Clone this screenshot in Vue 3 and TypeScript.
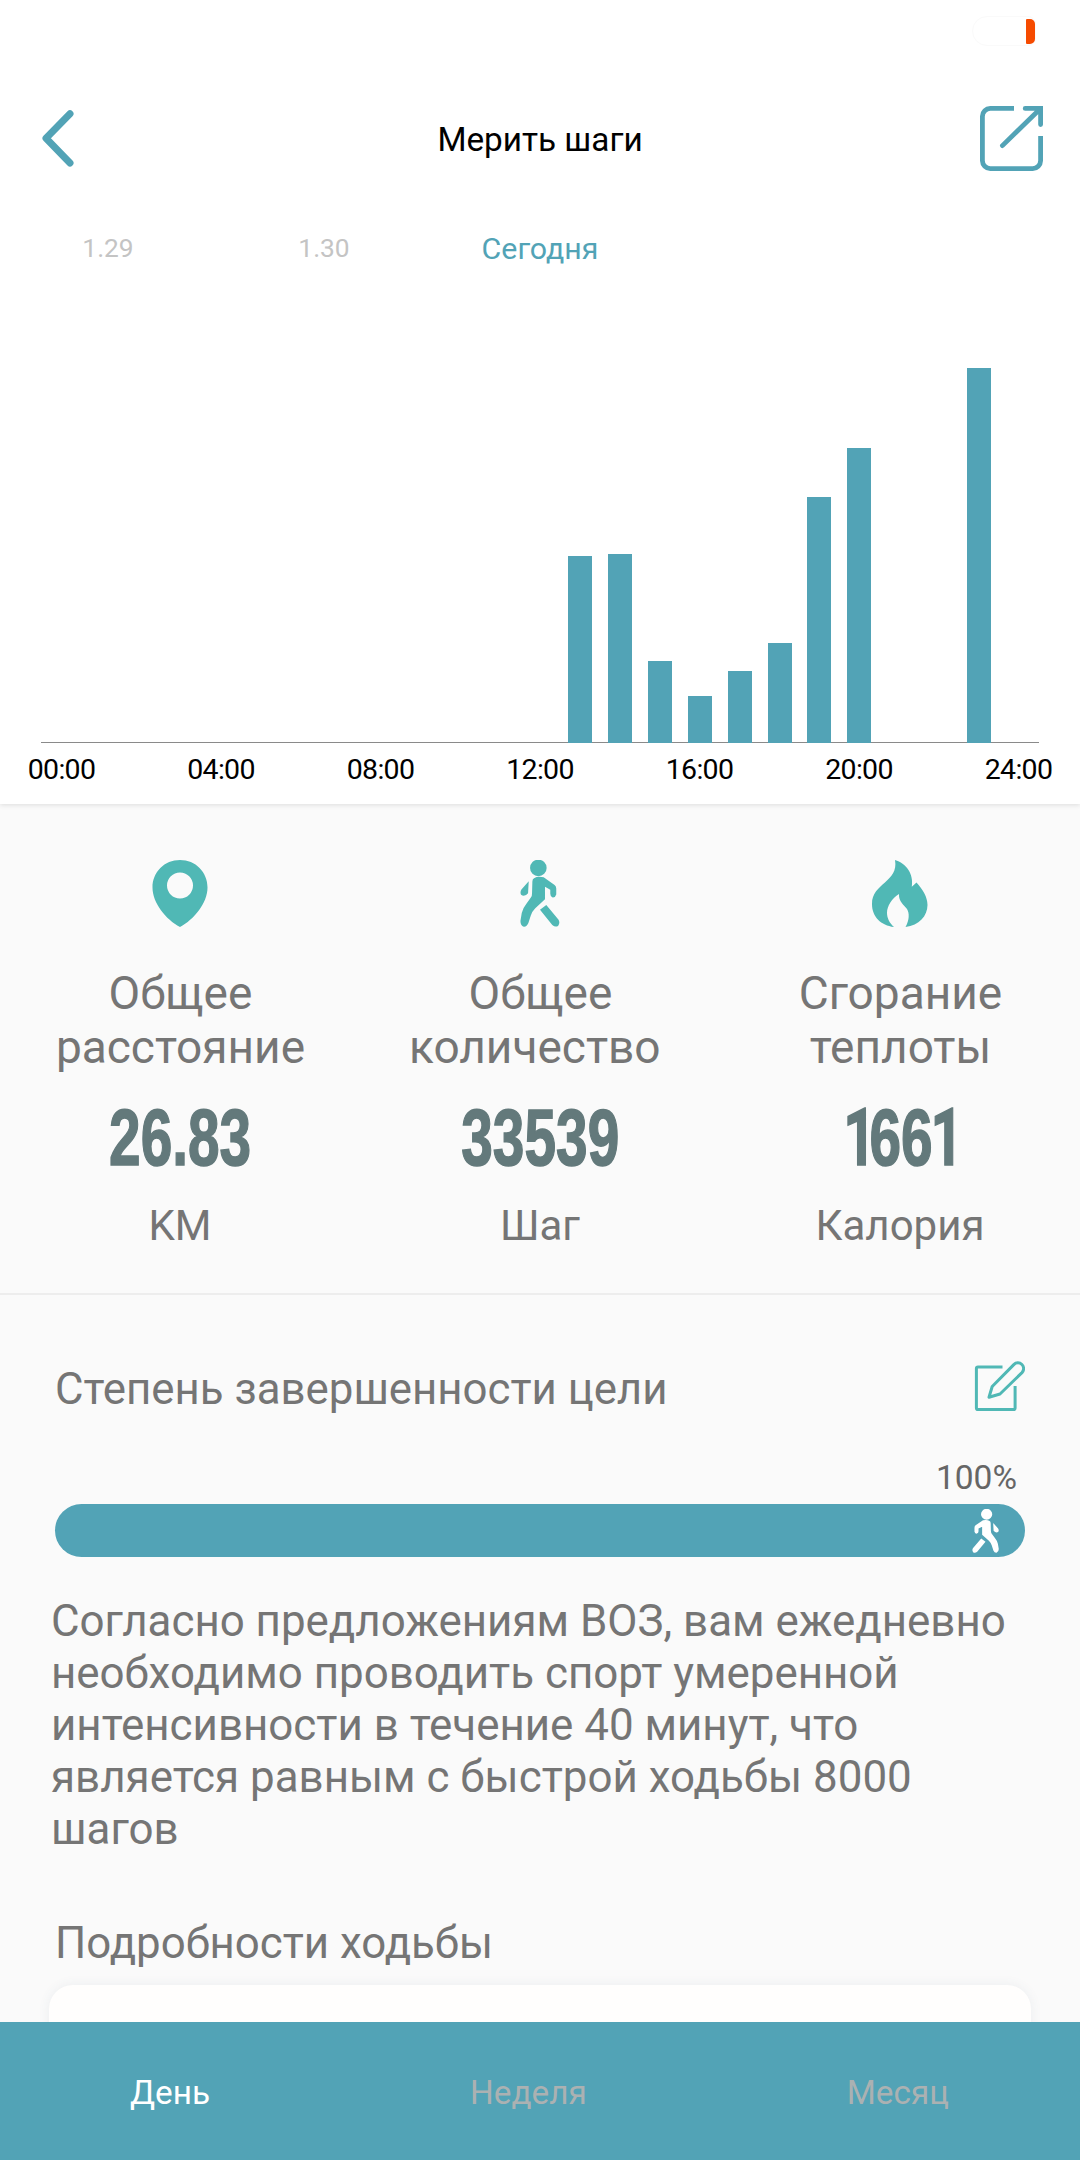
<script setup lang="ts">
interface Stat {
  icon: 'pin' | 'walk' | 'flame'
  label: string[]
  value: string
  unit: string
}

const days = ['1.29', '1.30', 'Сегодня', '', '']
const activeDay = 2

// One slot per hour, 0 through 24; values are bar heights in pixels.
const hours: number[] = Array.from({ length: 25 }, () => 0)
const recorded: Record<number, number> = {
  13: 187, 14: 189, 15: 82, 16: 47, 17: 72, 18: 100, 19: 246, 20: 295, 23: 375,
}
for (const [hour, height] of Object.entries(recorded)) hours[Number(hour)] = height

const ticks = ['00:00', '04:00', '08:00', '12:00', '16:00', '20:00', '24:00']

const stats: Stat[] = [
  { icon: 'pin', label: ['Общее', 'расстояние'], value: '26.83', unit: 'KM' },
  { icon: 'walk', label: ['Общее', 'количество\u00a0'], value: '33539', unit: 'Шаг' },
  { icon: 'flame', label: ['Сгорание', 'теплоты'], value: '1661', unit: 'Калория' },
]

const walker = [
  'M114 59 A25 25 0 1 1 114 109 A25 25 0 1 1 114 59Z',
  'M85 124 L63 149 Q58 157 62 165 Q72 173 83 160Z',
  'M101 115 Q112 108 130 112 L163 135 Q168 139 168 146 V164 Q165 174 157 173 Q150 171 150 162 V150 L134 141 V178 L104 206 Q94 216 91 228 L84 250 Q79 262 70 261 Q60 258 60 244 L64 220 Q68 204 78 192 L92 172 Q95 168 95 160 L96 125 Q96 118 101 115Z',
  'M138 196 L175 240 Q180 250 174 258 Q166 264 156 256 L119 210Z',
].join(' ')

const tabs = ['День', 'Неделя', 'Месяц']
const progress = 100
</script>

<template>
  <div class="screen">
    <div class="status">
      <div class="battery"><span class="charge"></span></div>
    </div>

    <header class="header">
      <svg class="back" width="32" height="57" viewBox="0 0 32 57">
        <path d="M28 3.800 L4 28.300 L28 53" />
      </svg>
      <h1>Мерить шаги</h1>
      <svg class="share" width="63" height="65" viewBox="0 0 63 65">
        <path d="M34 2.400 H10.500 A8 8 0 0 0 2.400 10.500 V54.500 A8 8 0 0 0 10.500 62.600 H52.500 A8 8 0 0 0 60.600 54.500 V30" />
        <path class="round" d="M22.400 39.600 L59 4 M45.200 2.400 H60.600 V18.500" />
      </svg>
    </header>

    <nav class="days">
      <span v-for="(d, i) in days" :key="i" :class="{ active: i === activeDay }">{{ d }}</span>
    </nav>

    <section class="chart">
      <div class="plot">
        <div v-for="(h, i) in hours" :key="i" class="slot">
          <div class="bar" :style="{ height: h + 'px' }"></div>
        </div>
      </div>
      <div class="ticks">
        <span v-for="t in ticks" :key="t">{{ t }}</span>
      </div>
    </section>

    <section class="stats">
      <div v-for="s in stats" :key="s.icon" class="stat">
        <svg v-if="s.icon === 'pin'" width="56" height="67" viewBox="0 0 56 67">
          <path fill-rule="evenodd" d="M28 0 C12.500 0 .500 12 .500 27.500 C.500 43 14 59.500 28 67 C42 59.500 55.500 43 55.500 27.500 C55.500 12 43.500 0 28 0Z M28 12.500 A13 13 0 1 1 28 38.500 A13 13 0 1 1 28 12.500Z" />
        </svg>
        <svg v-else-if="s.icon === 'walk'" width="40" height="67" viewBox="59 60 120 202">
          <path :d="walker" />
        </svg>
        <svg v-else width="56" height="67" viewBox="0 0 56 67">
          <path d="M23 0 C34 3 42 14 39.800 26.800 L44.500 22.500 C51 30 55.500 37 55.500 45 C55.500 56 47 65.500 33.500 67 C37.500 60 37.500 53 35 49 C32 44.500 26.500 42 27 34 C20 38 15 46 15 53 C15 58 17.500 63 22 67 C9 65.500 0 57 0 44 C0 23 27 22 23 0Z" />
        </svg>
        <div class="label">
          <div v-for="l in s.label" :key="l">{{ l }}</div>
        </div>
        <div class="value"><span v-for="(c, i) in s.value" :key="i" :class="{ one: c === '1' }">{{ c }}</span></div>
        <div class="unit">{{ s.unit }}</div>
      </div>
    </section>

    <section class="goal">
      <div class="goal-head">
        <h2>Степень завершенности цели</h2>
        <svg width="51" height="51" viewBox="0 0 51 51">
          <path d="M28.500 6 H4 Q2.400 6 2.400 7.600 V47 Q2.400 48.600 4 48.600 H39.500 Q41.100 48.600 41.100 47 V25" />
          <path d="M15 36.300 L18.200 25.500 L39.800 3.600 A5.700 5.700 0 0 1 48 11.600 L26 33 Z" />
        </svg>
      </div>
      <div class="percent">{{ progress }}%</div>
      <div class="track">
        <div class="fill" :style="{ width: progress + '%' }">
          <svg width="27" height="44" viewBox="59 60 120 202" preserveAspectRatio="none">
            <path :d="walker" transform="translate(238 0) scale(-1 1)" />
          </svg>
        </div>
      </div>
      <p>Согласно предложениям ВОЗ, вам ежедневно необходимо проводить спорт умеренной интенсивности в течение 40 минут, что является равным с быстрой ходьбы 8000 шагов</p>
    </section>

    <section class="details">
      <h2>Подробности ходьбы</h2>
      <div class="card"></div>
    </section>

    <nav class="tabs">
      <span v-for="(t, i) in tabs" :key="t" :class="{ active: i === 0 }">{{ t }}</span>
    </nav>
  </div>
</template>

<style>
body { margin: 0; background: #fafafa; }
</style>

<style scoped>
.screen {
  width: 1080px;
  height: 2160px;
  display: flex;
  flex-direction: column;
  overflow: hidden;
  background: #fafafa;
  color: #757575;
  font-family: Roboto, "Noto Sans", sans-serif;
}
h1, h2, p { margin: 0; font-weight: 400; }
svg { display: block; flex: none; }

.status {
  height: 60px;
  flex: none;
  box-sizing: border-box;
  padding: 16px 44px 0 0;
  display: flex;
  justify-content: flex-end;
  background: #fff;
}
.battery {
  width: 64px;
  height: 30px;
  box-sizing: border-box;
  border: 1px solid #fafafa;
  border-radius: 15px 8px 8px 15px;
  display: flex;
  justify-content: flex-end;
  align-items: center;
}
.charge {
  width: 9px;
  height: 25px;
  border-radius: 1px 5px 5px 1px;
  background: #f64b00;
}

.header {
  height: 158px;
  flex: none;
  box-sizing: border-box;
  padding: 0 37px 0 42px;
  display: grid;
  grid-template-columns: 63px 1fr 68px;
  align-items: center;
  background: #fff;
}
.header h1 {
  padding-top: 2px;
  text-align: center;
  font-size: 33.300px;
  line-height: 40px;
  color: #000;
}
.header svg {
  margin-bottom: 2px;
  fill: none;
  stroke: #52a3b6;
  stroke-width: 4.800;
}
.header .back { stroke-width: 7; stroke-linecap: round; stroke-linejoin: round; }
.share { justify-self: end; }
.share .round { stroke-linecap: round; }

.days {
  height: 60px;
  flex: none;
  display: grid;
  grid-template-columns: repeat(5, 1fr);
  align-items: center;
  background: #fff;
  text-align: center;
  font-size: 26.300px;
  color: #c4c4c4;
}
.days .active { font-size: 30.300px; color: #52a3b6; }

.chart {
  height: 526px;
  flex: none;
  position: relative;
  z-index: 1;
  display: flex;
  flex-direction: column;
  background: #fff;
  box-shadow: 0 1px 5px rgba(0, 0, 0, 0.12);
  clip-path: inset(0 0 -10px 0);
}
.plot {
  height: 465px;
  margin: 0 41px;
  display: flex;
  align-items: flex-end;
  background: linear-gradient(#8a8a8a, #8a8a8a) 0 100% / 100% 1px no-repeat;
}
.slot { flex: 1; display: flex; justify-content: center; }
.bar { width: 24px; background: #52a3b6; }
.ticks {
  margin: 10px 21.500px 0;
  display: flex;
  justify-content: space-between;
  line-height: 34px;
  font-size: 28.500px;
  letter-spacing: -0.7px;
  color: #000;
}
.ticks span { width: 80px; text-align: center; }

.stats {
  height: 491px;
  flex: none;
  box-sizing: border-box;
  padding-top: 56px;
  display: grid;
  grid-template-columns: repeat(3, 1fr);
  border-bottom: 2px solid #ededed;
}
.stat { display: flex; flex-direction: column; align-items: center; }
.stat svg { fill: #50b8b5; }
.label {
  margin-top: 39px;
  padding-left: 1px;
  text-align: center;
  font-size: 46px;
  line-height: 54px;
}
.value {
  margin-top: 29px;
  height: 70px;
  font-family: "Liberation Sans", Arial, sans-serif;
  font-weight: 700;
  font-size: 80px;
  line-height: 70px;
  color: #63797b;
  -webkit-text-stroke: 1.500px #63797b;
  transform: scaleX(0.71);
}
/* The digit 1 is a plain stem without a foot, set tight to its neighbours. */
.value .one {
  font-family: Roboto, sans-serif;
  letter-spacing: -9px;
}
.value span:has(+ .one) { letter-spacing: -3px; }
.unit {
  margin-top: 28px;
  font-size: 42px;
  line-height: 50px;
}

.goal { padding: 66px 55px 0; }
.goal h2, .details h2 { font-size: 43.800px; line-height: 52px; }
.goal-head { height: 53px; display: flex; justify-content: space-between; }
.goal-head h2 { margin-top: 2px; }
.goal-head svg {
  fill: none;
  stroke: #50b8b5;
  stroke-width: 3;
  stroke-linejoin: round;
}
.percent {
  margin: 44px 8px 0 0;
  text-align: right;
  font-size: 33.500px;
  line-height: 40px;
  color: #666;
}
.track { margin-top: 6px; height: 53px; }
.fill {
  height: 100%;
  box-sizing: border-box;
  padding-right: 26px;
  display: flex;
  justify-content: flex-end;
  align-items: center;
  border-radius: 27px;
  background: #52a3b6;
}
.fill svg { fill: #fff; }
.goal p {
  margin: 38px -25px 0 -4px;
  font-size: 43.900px;
  line-height: 52px;
}

.details {
  flex: 1;
  min-height: 0;
  padding: 62px 49px 0;
  overflow: hidden;
}
.details h2 { margin-left: 6px; }
.card {
  margin-top: 16px;
  height: 160px;
  border-radius: 24px;
  background: #fffefd;
  box-shadow: 0 0 12px rgba(60, 90, 110, 0.08);
}

.tabs {
  height: 138px;
  flex: none;
  box-sizing: border-box;
  padding: 2px 1px 0 0;
  display: flex;
  justify-content: space-around;
  align-items: center;
  background: #52a3b6;
  color: #abb1b2;
  font-size: 33.300px;
}
.tabs .active { color: #fff; }
</style>
